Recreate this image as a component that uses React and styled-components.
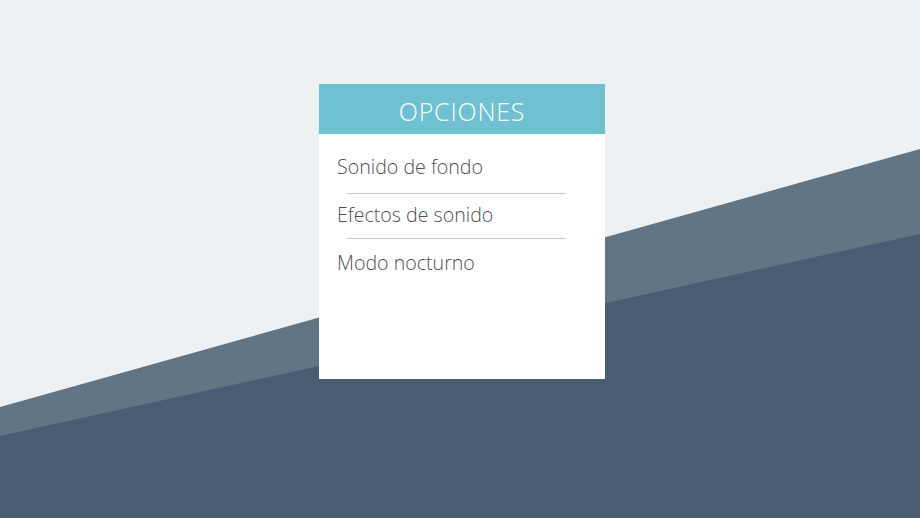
import React from "react";
import styled, { createGlobalStyle } from "styled-components";

const GlobalStyle = createGlobalStyle`
  html, body {
    margin: 0;
    padding: 0;
    background: #edf1f4;
  }
  body {
    font-family: "Open Sans", "Liberation Sans", sans-serif;
  }
`;

const items = ["Sonido de fondo", "Efectos de sonido", "Modo nocturno"];
// dividers don't sit at the same spot under every row
const dividerOffsets = [2, -1];

export default function App() {
  return (
    <>
      <GlobalStyle />
      <Page>
        <Backdrop viewBox="0 0 920 518" preserveAspectRatio="none">
          <polygon points="0,407 920,149 920,518 0,518" fill="#627585" />
          <polygon points="0,436 920,234 920,518 0,518" fill="#485d71" />
        </Backdrop>
        <Card>
          <Header>OPCIONES</Header>
          <List>
            {items.map((label, i) => (
              <React.Fragment key={label}>
                {i > 0 && <Divider $offset={dividerOffsets[i - 1]} />}
                <Item>{label}</Item>
              </React.Fragment>
            ))}
          </List>
        </Card>
      </Page>
    </>
  );
}

const Page = styled.div`
  position: relative;
  width: 920px;
  height: 518px;
  overflow: hidden;
  display: flex;
  justify-content: center;
  align-items: flex-start;
  padding-top: 84px;
  box-sizing: border-box;
`;

const Backdrop = styled.svg`
  position: absolute;
  left: 0;
  top: 0;
  width: 920px;
  height: 518px;
`;

const Card = styled.div`
  position: relative;
  width: 286px;
  height: 295px;
  margin-left: 4px;
  background: #ffffff;
  display: flex;
  flex-direction: column;
`;

const Header = styled.div`
  height: 50px;
  box-sizing: border-box;
  padding-top: 4px;
  background: #6fc1d2;
  color: #ffffff;
  font-size: 25px;
  font-weight: 300;
  display: flex;
  align-items: center;
  justify-content: center;
  letter-spacing: 0.8px;
`;

const List = styled.div`
  display: flex;
  flex-direction: column;
  padding-top: 9px;
`;

const Item = styled.div`
  height: 48px;
  line-height: 48px;
  padding-left: 18px;
  font-size: 19.6px;
  font-weight: 300;
  color: #505050;
`;

const Divider = styled.div`
  height: 1px;
  margin: ${(p) => p.$offset}px 39px ${(p) => -(p.$offset + 1)}px 28px;
  background: #c4c4c4;
`;
